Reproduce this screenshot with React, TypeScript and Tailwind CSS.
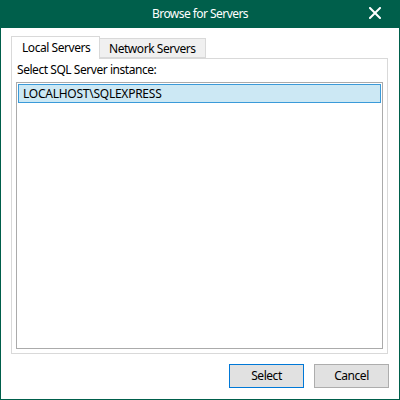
import React from "react";

const FONT = { fontFamily: '"Noto Sans", "Open Sans", sans-serif' };

function CloseIcon() {
  return (
    <svg width="12" height="12" viewBox="0 0 12 12" className="block">
      <path d="M1 1 L11 11 M11 1 L1 11" stroke="#ffffff" strokeWidth="2" strokeLinecap="square" />
    </svg>
  );
}

export default function App() {
  return (
    <div className="flex h-[400px] w-[400px] flex-col bg-white text-[12px] tracking-[-0.45px] text-black" style={FONT}>
      {/* title bar */}
      <div className="relative flex h-[28px] shrink-0 items-center justify-center bg-[#005f4b] leading-[28px] text-white">
        <span className="tracking-[-0.55px]">Browse for Servers</span>
        <div className="absolute right-[19px] top-[7px]">
          <CloseIcon />
        </div>
      </div>

      {/* body */}
      <div className="flex flex-1 flex-col border-x border-b border-[#005f4b] px-[10px] pt-[8px]">
        {/* tabs */}
        <div className="relative z-10 flex h-[22px] items-start">
          <div className="h-[23px] w-[89px] border border-b-0 border-[#d9d9d9] bg-white pl-[10px] leading-[22px]">
            Local Servers
          </div>
          <div className="mt-[2px] h-[20px] w-[106px] border border-l-0 border-[#d9d9d9] bg-[#f0f0f0] pl-[9px] leading-[19px]">
            Network Servers
          </div>
        </div>

        {/* panel */}
        <div className="flex h-[296px] w-[377px] flex-col border border-[#d9d9d9] px-[4px] pt-[3px]">
          <div className="h-[16px] pl-[1px] leading-[16px]">Select SQL Server instance:</div>
          <div className="mt-[4px] h-[267px] border border-[#ababab] p-[1px]">
            <div className="h-[19px] border border-[#3a9ad9] bg-[#cce8f4] pl-[4px] leading-[17px] tracking-[-0.25px]">
              LOCALHOST\SQLEXPRESS
            </div>
          </div>
        </div>

        {/* buttons */}
        <div className="mt-[10px] flex justify-end gap-[10px]">
          <button className="h-[24px] w-[75px] border border-[#0078d7] bg-[#e1e1e1] leading-[22px]">Select</button>
          <button className="h-[24px] w-[75px] border border-[#adadad] bg-[#e1e1e1] leading-[22px]">Cancel</button>
        </div>
      </div>
    </div>
  );
}
